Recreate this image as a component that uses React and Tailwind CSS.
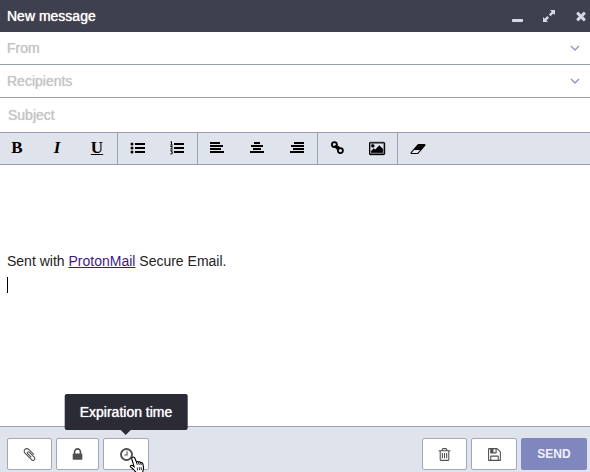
import { useState } from "react";

const ICONS = {
  close:
    "M1490 1322q0 40-28 68l-136 136q-28 28-68 28t-68-28l-294-294-294 294q-28 28-68 28t-68-28l-136-136q-28-28-28-68t28-68l294-294-294-294q-28-28-28-68t28-68l136-136q28-28 68-28t68 28l294 294 294-294q28-28 68-28t68 28l136 136q28 28 28 68t-28 68l-294 294 294 294q28 28 28 68z",
  paperclip:
    "M1596 1385q0 117-79 196t-196 79q-135 0-235-100l-777-776q-113-115-113-271 0-159 110-270t269-111q158 0 273 113l605 606q10 10 10 22 0 16-30.5 46.5t-46.5 30.5q-13 0-23-10l-606-607q-79-77-181-77-106 0-179 75t-73 181q0 105 76 181l776 777q63 63 145 63 64 0 106-42t42-106q0-82-63-145l-581-581q-26-24-60-24-29 0-48 19t-19 48q0 32 25 59l410 410q10 10 10 22 0 16-31 47t-47 31q-12 0-22-10l-410-410q-63-61-63-149 0-82 57-139t139-57q88 0 149 63l581 581q100 98 100 235z",
  lock:
    "M640 768h512v-192q0-106-75-181t-181-75-181 75-75 181v192zm832 96v576q0 40-28 68t-68 28h-960q-40 0-68-28t-28-68v-576q0-40 28-68t68-28h32v-192q0-184 132-316t316-132 316 132 132 316v192h32q40 0 68 28t28 68z",
  clock:
    "M1024 544v448q0 14-9 23t-23 9h-320q-14 0-23-9t-9-23v-64q0-14 9-23t23-9h224v-352q0-14 9-23t23-9h64q14 0 23 9t9 23zm416 352q0-148-73-273t-198-198-273-73-273 73-198 198-73 273 73 273 198 198 273 73 273-73 198-198 73-273zm224 0q0 209-103 385.5t-279.5 279.5-385.5 103-385.5-103-279.5-279.5-103-385.5 103-385.5 279.5-279.5 385.5-103 385.5 103 279.5 279.5 103 385.5z",
  trash:
    "M704 736v576q0 14-9 23t-23 9h-64q-14 0-23-9t-9-23v-576q0-14 9-23t23-9h64q14 0 23 9t9 23zm256 0v576q0 14-9 23t-23 9h-64q-14 0-23-9t-9-23v-576q0-14 9-23t23-9h64q14 0 23 9t9 23zm256 0v576q0 14-9 23t-23 9h-64q-14 0-23-9t-9-23v-576q0-14 9-23t23-9h64q14 0 23 9t9 23zm128 724v-948h-896v948q0 22 7 40.5t14.5 27 10.5 8.5h832q3 0 10.5-8.5t14.5-27 7-40.5zm-672-1076h448l-48-117q-7-9-17-11h-317q-10 2-17 11zm928 32v64q0 14-9 23t-23 9h-96v948q0 83-47 143.5t-113 60.5h-832q-66 0-113-58.5t-47-141.5v-952h-96q-14 0-23-9t-9-23v-64q0-14 9-23t23-9h309l70-167q15-37 54-63t79-26h320q40 0 79 26t54 63l70 167h309q14 0 23 9t9 23z",
  save:
    "M512 1536h768v-384h-768v384zm896 0h128v-896q0-14-10-38.5t-20-34.5l-281-281q-10-10-34-20t-39-10v416q0 40-28 68t-68 28h-576q-40 0-68-28t-28-68v-416h-128v1280h128v-416q0-40 28-68t68-28h832q40 0 68 28t28 68v416zm-384-928v-320q0-13-9.5-22.5t-22.5-9.5h-192q-13 0-22.5 9.5t-9.5 22.5v320q0 13 9.5 22.5t22.5 9.5h192q13 0 22.5-9.5t9.5-22.5zm640 32v928q0 40-28 68t-68 28h-1344q-40 0-68-28t-28-68v-1344q0-40 28-68t68-28h928q40 0 88 20t76 48l280 280q28 28 48 76t20 88z",
};

const Icon = ({ name, className = "size-[15px]" }) => (
  <svg viewBox="0 0 1792 1792" className={className} fill="currentColor" aria-hidden="true">
    <path d={ICONS[name]} />
  </svg>
);

const Glyph = ({ children }) => (
  <svg viewBox="0 0 16 16" className="size-4" fill="currentColor" aria-hidden="true">
    {children}
  </svg>
);

const Chevron = () => (
  <svg viewBox="0 0 10 8" className="h-2 w-2.5" fill="none" stroke="currentColor" strokeWidth="1.4" aria-hidden="true">
    <path d="M1 2l4 4 4-4" />
  </svg>
);

const toolbarGroups = [
  [
    { label: "Bold", icon: <span className="font-bold">B</span> },
    { label: "Italic", icon: <span className="font-bold italic">I</span> },
    { label: "Underline", icon: <span className="font-bold underline decoration-1 underline-offset-1">U</span> },
  ],
  [
    {
      label: "Bulleted list",
      icon: (
        <Glyph>
          <path d="M5 2h10v2H5zM5 6h10v2H5zM5 10h10v2H5z" />
          <circle cx="2" cy="3" r="1.5" />
          <circle cx="2" cy="7" r="1.5" />
          <circle cx="2" cy="11" r="1.5" />
        </Glyph>
      ),
    },
    {
      label: "Numbered list",
      icon: (
        <Glyph>
          <path d="M4 2h10v2H4zM4 6h10v2H4zM4 10h10v2H4z" />
          <path d="M.5 1.2l1-.6v3.2M.3 4h2.4M.4 5.5h1.8v1L.6 8h2.2M.4 9.8h2L1.4 11q1.2 0 1.2 1T.4 13" fill="none" stroke="currentColor" strokeWidth="1" />
        </Glyph>
      ),
    },
  ],
  [
    { label: "Align left", icon: <Glyph><path d="M0 1h10v2H0zM0 4h13v2H0zM0 7h11v2H0zM0 10h14v2H0z" /></Glyph> },
    { label: "Align center", icon: <Glyph><path d="M4 1h6v2H4zM1 4h12v2H1zM3 7h8v2H3zM0 10h14v2H0z" /></Glyph> },
    { label: "Align right", icon: <Glyph><path d="M4 1h10v2H4zM1 4h13v2H1zM3 7h11v2H3zM0 10h14v2H0z" /></Glyph> },
  ],
  [
    {
      label: "Insert link",
      icon: (
        <Glyph>
          <g fill="none" stroke="currentColor" strokeWidth="1.8">
            <circle cx="4.4" cy="3.6" r="2.5" />
            <circle cx="10.4" cy="9.6" r="2.5" />
            <path d="M5 4.4l1.6 3 1.8.4M6 5.4l2.4.4 1.2 2.4" />
          </g>
        </Glyph>
      ),
    },
    {
      label: "Insert image",
      icon: (
        <svg viewBox="0 0 2048 1792" className="h-[15px] w-[17px]" fill="currentColor" stroke="currentColor" strokeWidth="50" aria-hidden="true">
          <path d="M576 576q0 80-56 136t-136 56-136-56-56-136 56-136 136-56 136 56 56 136zm1024 384v448h-1408v-192l320-320 160 160 512-512zm96-704h-1600q-13 0-22.5 9.5t-9.5 22.5v1216q0 13 9.5 22.5t22.5 9.5h1600q13 0 22.5-9.5t9.5-22.5v-1216q0-13-9.5-22.5t-22.5-9.5zm160 32v1216q0 66-47 113t-113 47h-1600q-66 0-113-47t-47-113v-1216q0-66 47-113t113-47h1600q66 0 113 47t47 113z" transform="translate(64)" />
        </svg>
      ),
    },
  ],
  [
    {
      label: "Clear formatting",
      icon: (
        <svg viewBox="0 0 2048 1792" className="h-3.5 w-4" fill="currentColor" aria-hidden="true">
          <path d="M960 1408l336-384h-768l-336 384h768zm1013-1077q15 34 9.5 71.5t-30.5 65.5l-896 1024q-38 44-96 44h-768q-38 0-69.5-20.5t-47.5-54.5q-15-34-9.5-71.5t30.5-65.5l896-1024q38-44 96-44h768q38 0 69.5 20.5t47.5 54.5z" />
        </svg>
      ),
    },
  ],
];

const Toolbar = () => (
  <div className="flex h-8 shrink-0 border-b border-[#9a9fb1] bg-[#dfe3eb] font-['Liberation_Serif',serif] text-[17px] text-black">
    {toolbarGroups.map((group, index) => (
      <div
        key={`group-${index}`}
        className="flex border-r border-[#9a9fb1] first:-ml-[3px] last:border-r-0"
      >
        {group.map(({ label, icon }) => (
          <button
            key={label}
            type="button"
            aria-label={label}
            className="flex w-10 items-center justify-center last:w-[39px] only:w-10 [[aria-label=Underline]&]:w-10"
          >
            {icon}
          </button>
        ))}
      </div>
    ))}
  </div>
);

const ActionButton = ({ label, icon, className = "w-[45px]", ...props }) => (
  <button
    type="button"
    aria-label={label}
    className={`flex h-8 items-center justify-center rounded-xs border border-[#a2a8bb] bg-white text-[#505050] ${className}`}
    {...props}
  >
    <Icon name={icon} />
  </button>
);

const HandPointer = () => (
  <svg viewBox="0 0 16 18" className="absolute top-[18px] left-[26px] h-[18px] w-4" aria-hidden="true">
    <path
      d="M3.6 1.2c1-.5 1.9 0 2.3 1l1.6 4c.4-.9 1.7-.9 2.1.1.6-.8 1.8-.6 2.1.4.8-.5 1.9 0 2.1 1l.7 3.4c.3 2-.5 3-.7 4.4v2H7.6c-.7-1.8-2-2.8-3.1-4L1.6 11c-.7-1 .4-2.2 1.5-1.6l2 1.3L2.8 3c-.2-.8.1-1.5.8-1.8z"
      fill="#fff"
      stroke="#000"
      strokeWidth="1.1"
    />
    <path d="M7.5 6.2l.8 2.6M9.6 6.4l.7 2.5M11.7 6.8l.6 2.3" fill="none" stroke="#000" strokeWidth="0.9" />
    <path d="M8.2 11.5l.4 3M10.2 11.2l.4 3M12.1 11l.3 3" fill="none" stroke="#000" strokeWidth="0.8" />
  </svg>
);

const App = () => {
  const [recipients, setRecipients] = useState("");
  const [subject, setSubject] = useState("");

  return (
    <div className="flex h-screen flex-col overflow-hidden bg-white font-['Liberation_Sans',Arial,sans-serif] text-sm text-[#222]">
      <header className="flex h-8 shrink-0 items-center justify-between bg-[#3e404d] pr-0.5 pl-[7px] text-white">
        <h1 className="[text-shadow:0_0_1px_currentColor]">New message</h1>
        <div className="flex items-center gap-[18px] text-[#d5d8e5]">
          <button type="button" aria-label="Minimize">
            <svg viewBox="0 0 12 12" className="size-3" fill="currentColor" aria-hidden="true">
              <rect x="0" y="9" width="11" height="3" rx="0.7" />
            </svg>
          </button>
          <button type="button" aria-label="Expand">
            <svg viewBox="0 0 14 14" className="size-3.5" fill="currentColor" aria-hidden="true">
              <path d="M8 1h5v5l-1.6-1.6-2.8 2.8-1.7-1.7 2.8-2.8zM1 8l1.7 1.7 2.6-2.6L7 8.8l-2.6 2.6L6 13H1z" />
            </svg>
          </button>
          <button type="button" aria-label="Close">
            <Icon name="close" className="size-3.5" />
          </button>
        </div>
      </header>

      <div className="flex h-[33px] shrink-0 items-center justify-between border-b border-[#9a9fb1] pr-2.5 pl-[7px] text-[#c5c5c5]">
        <span className="[text-shadow:0_0_1px_currentColor]">From</span>
        <button type="button" aria-label="Choose sender" className="text-[#9096cb]">
          <Chevron />
        </button>
      </div>

      <div className="flex h-[33px] shrink-0 items-center border-b border-[#9a9fb1] pr-2.5 pl-[7px]">
        <input
          type="text"
          aria-label="Recipients"
          placeholder="Recipients"
          value={recipients}
          onChange={(e) => setRecipients(e.target.value)}
          className="min-w-0 flex-1 outline-none placeholder:text-[#c5c5c5] placeholder:[text-shadow:0_0_1px_currentColor]"
        />
        <button type="button" aria-label="Show CC and BCC" className="text-[#9096cb]">
          <Chevron />
        </button>
      </div>

      <div className="flex h-[35px] shrink-0 items-center border-b border-[#9a9fb1] px-2">
        <input
          type="text"
          aria-label="Subject"
          placeholder="Subject"
          value={subject}
          onChange={(e) => setSubject(e.target.value)}
          className="min-w-0 flex-1 outline-none placeholder:text-[#c5c5c5] placeholder:[text-shadow:0_0_1px_currentColor]"
        />
      </div>

      <Toolbar />

      <main className="flex-1 px-[7px] pt-[85px] leading-[23px]">
        <p>
          Sent with{" "}
          <a href="#protonmail" className="text-[#3f1a7d] underline">
            ProtonMail
          </a>{" "}
          Secure Email.
        </p>
        <div className="flex h-[23px] items-center">
          <span className="h-4 w-px bg-black" />
        </div>
      </main>

      <footer className="flex h-[46px] shrink-0 justify-between border-t border-[#9a9fb1] bg-[#dfe3eb] pt-[11px] pr-[3px] pl-[7px]">
        <div className="flex gap-1">
          <ActionButton label="Attachments" icon="paperclip" />
          <ActionButton label="Encryption" icon="lock" className="w-[43px]" />
          <div className="relative">
            <ActionButton
              label="Expiration time"
              icon="clock"
              className="w-[46px]"
              aria-describedby="expiration-tooltip"
            />
            <div
              id="expiration-tooltip"
              role="tooltip"
              className="absolute bottom-[42px] left-1/2 -translate-x-1/2 rounded-xs bg-[#2b2b36] px-[15px] py-2 whitespace-nowrap text-white"
            >
              <span className="[text-shadow:0_0_1px_currentColor]">Expiration time</span>
              <span className="absolute top-full left-1/2 -translate-x-1/2 border-x-[5px] border-t-[5px] border-x-transparent border-t-[#2b2b36]" />
            </div>
            <HandPointer />
          </div>
        </div>
        <div className="flex gap-1">
          <ActionButton label="Discard draft" icon="trash" />
          <ActionButton label="Save draft" icon="save" className="w-[46px]" />
          <button
            type="button"
            className="h-8 w-[66px] rounded-xs bg-[#8087bf] text-xs font-bold text-[#f0f1fa]"
          >
            SEND
          </button>
        </div>
      </footer>
    </div>
  );
};

export default App;
